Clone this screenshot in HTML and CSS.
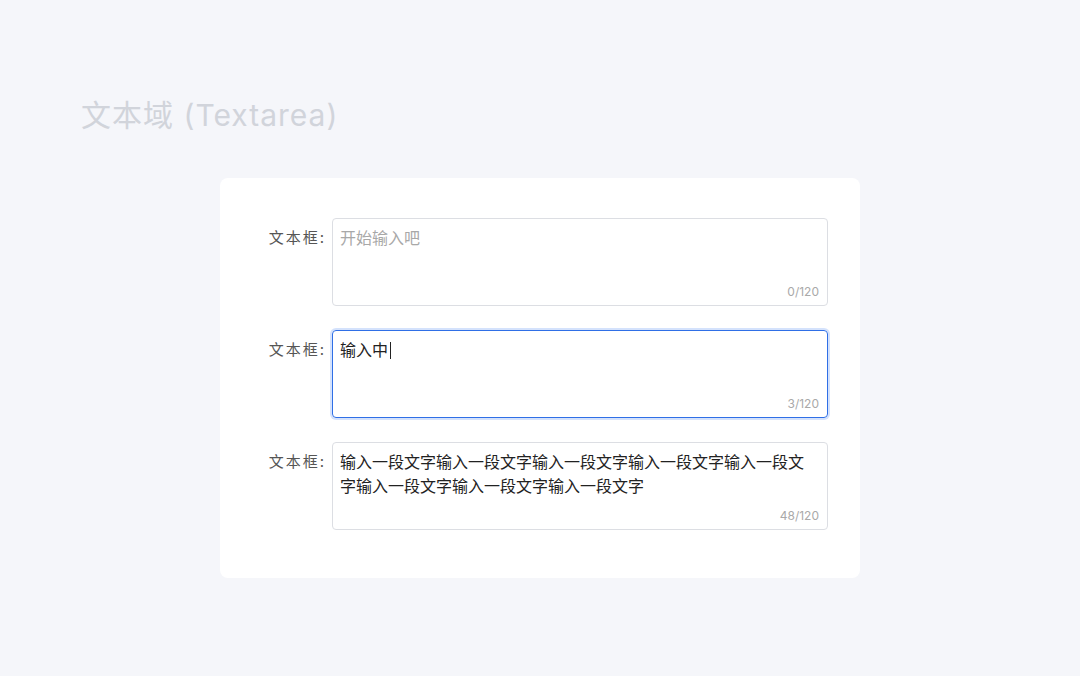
FILE: index.html
```html
<!DOCTYPE html>
<html>
<head>
  <title>文本域 (Textarea)</title>
  <link rel="stylesheet" href="styles.css">
</head>
<body>

  <h1 class="title">文本域 (Textarea)</h1>

  <div class="card">
    <div class="row">
      <div class="label">文本框:</div>
      <div class="box">
        <div class="text placeholder">开始输入吧</div>
        <div class="count">0/120</div>
      </div>
    </div>

    <div class="row">
      <div class="label">文本框:</div>
      <div class="box focus">
        <div class="text">输入中<span class="caret"></span></div>
        <div class="count">3/120</div>
      </div>
    </div>

    <div class="row">
      <div class="label">文本框:</div>
      <div class="box">
        <div class="text">输入一段文字输入一段文字输入一段文字输入一段文字输入一段文字输入一段文字输入一段文字输入一段文字</div>
        <div class="count">48/120</div>
      </div>
    </div>
  </div>

</body>
</html>
```

FILE: styles.css
```css
body {
  margin: 0;
  background-color: #f5f6fa;
  font-family: "Inter", "Noto Sans CJK SC", sans-serif;
}

.title {
  margin: 95px 0 0 81px;
  font-size: 30px;
  line-height: 40px;
  font-weight: 400;
  letter-spacing: 1px;
  color: #d1d4db;
}

.card {
  background: white;
  width: 640px;
  box-sizing: border-box;
  margin: 43px 0 0 220px;
  padding: 40px 32px 48px 48px;
  border-radius: 8px;
  display: flex;
  flex-direction: column;
  gap: 24px;
}

.row {
  display: flex;
  align-items: flex-start;
}

.label {
  width: 58px;
  padding-top: 8px;
  margin-right: 6px;
  font-size: 15px;
  line-height: 24px;
  letter-spacing: 2px;
  color: #555;
  text-align: right;
  white-space: nowrap;
}

.box {
  flex: 1;
  height: 88px;
  box-sizing: border-box;
  border: 1px solid #dcdee3;
  border-radius: 4px;
  padding: 7px 8px 5px 7px;
  display: flex;
  flex-direction: column;
  justify-content: space-between;
}

.box.focus {
  border-color: #2f6fe6;
  box-shadow: 0 0 0 2px #d4e2fc;
}

.text {
  font-size: 16px;
  line-height: 24px;
  color: #222;
}

.placeholder {
  color: #a8a8a8;
}

.caret {
  display: inline-block;
  width: 1px;
  height: 17px;
  background: #222;
  margin-left: 2px;
  vertical-align: -3px;
}

.count {
  align-self: flex-end;
  font-size: 12px;
  line-height: 16px;
  color: #a9a9a9;
}
```
